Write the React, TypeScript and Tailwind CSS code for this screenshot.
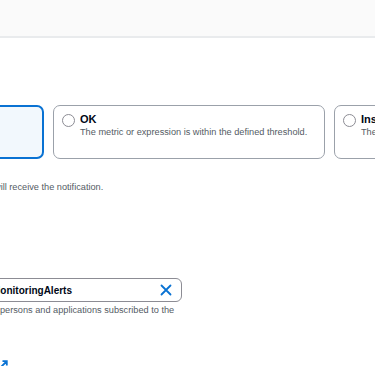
import React from 'react';

const font = { fontFamily: '"Liberation Sans", Arial, sans-serif' };

const Radio: React.FC = () => (
  <span className="mt-[1px] h-[13px] w-[13px] shrink-0 rounded-full border border-[#8c8c94] bg-white" />
);

const StateCard: React.FC<{ title: string; desc: string; className?: string }> = ({ title, desc, className }) => (
  <div className={`flex h-[54px] shrink-0 gap-[5px] rounded-[7px] border border-[#9ba1aa] bg-white pl-[8px] pr-[9px] pt-[7px] ${className ?? ''}`}>
    <Radio />
    <div className="flex flex-col">
      <span className="text-[11px] font-semibold leading-[13px] text-[#000716]">{title}</span>
      <span className="text-[9.2px] leading-[13px] text-[#545b64] whitespace-nowrap">{desc}</span>
    </div>
  </div>
);

export default function App() {
  return (
    <div className="h-[366px] w-[375px] overflow-hidden bg-white" style={font}>
      {/* page header band */}
      <div className="h-[38px] border-b-2 border-[#e9ebed] bg-[#fafafa]" />

      {/* alarm state trigger */}
      <div className="mt-[67px] flex gap-[9px]">
        <div className="-ml-[200px] h-[54px] w-[244px] shrink-0 rounded-[7px] border-2 border-[#0972d3] bg-[#f2f8fd]" />
        <StateCard
          className="w-[272px]"
          title="OK"
          desc="The metric or expression is within the defined threshold."
        />
        <StateCard
          className="w-[260px]"
          title="Insufficient data"
          desc="The alarm has just started or not enough data is available."
        />
      </div>

      <p className="mt-[22px] -ml-[6px] text-[9.2px] leading-[13px] text-[#545b64] whitespace-nowrap">
        will receive the notification.
      </p>

      {/* SNS topic */}
      <div className="mt-[84px] -ml-[120px] flex h-[24px] w-[302px] items-center justify-between rounded-[6px] border border-[#8c8c94] bg-white pl-[10px] pr-[9px]">
        <span className="ml-[101px] text-[10px] font-semibold text-[#000716]">MonitoringAlerts</span>
        <svg width="12" height="12" viewBox="0 0 12 12" fill="none" stroke="#0972d3" strokeWidth="1.8" strokeLinecap="round">
          <path d="M1.5 1.5l9 9M10.5 1.5l-9 9" />
        </svg>
      </div>
      <p className="mt-[2px] text-[9.2px] leading-[13px] text-[#545b64] whitespace-nowrap">
        persons and applications subscribed to the
      </p>

      <div className="mt-[43px] flex items-center">
        <svg width="8" height="8" viewBox="0 0 8 8" fill="none" stroke="#0972d3" strokeWidth="1.8">
          <path d="M1 7l5.5-5.5M2.5 1.2h4.3v4.3" />
        </svg>
      </div>
    </div>
  );
}
